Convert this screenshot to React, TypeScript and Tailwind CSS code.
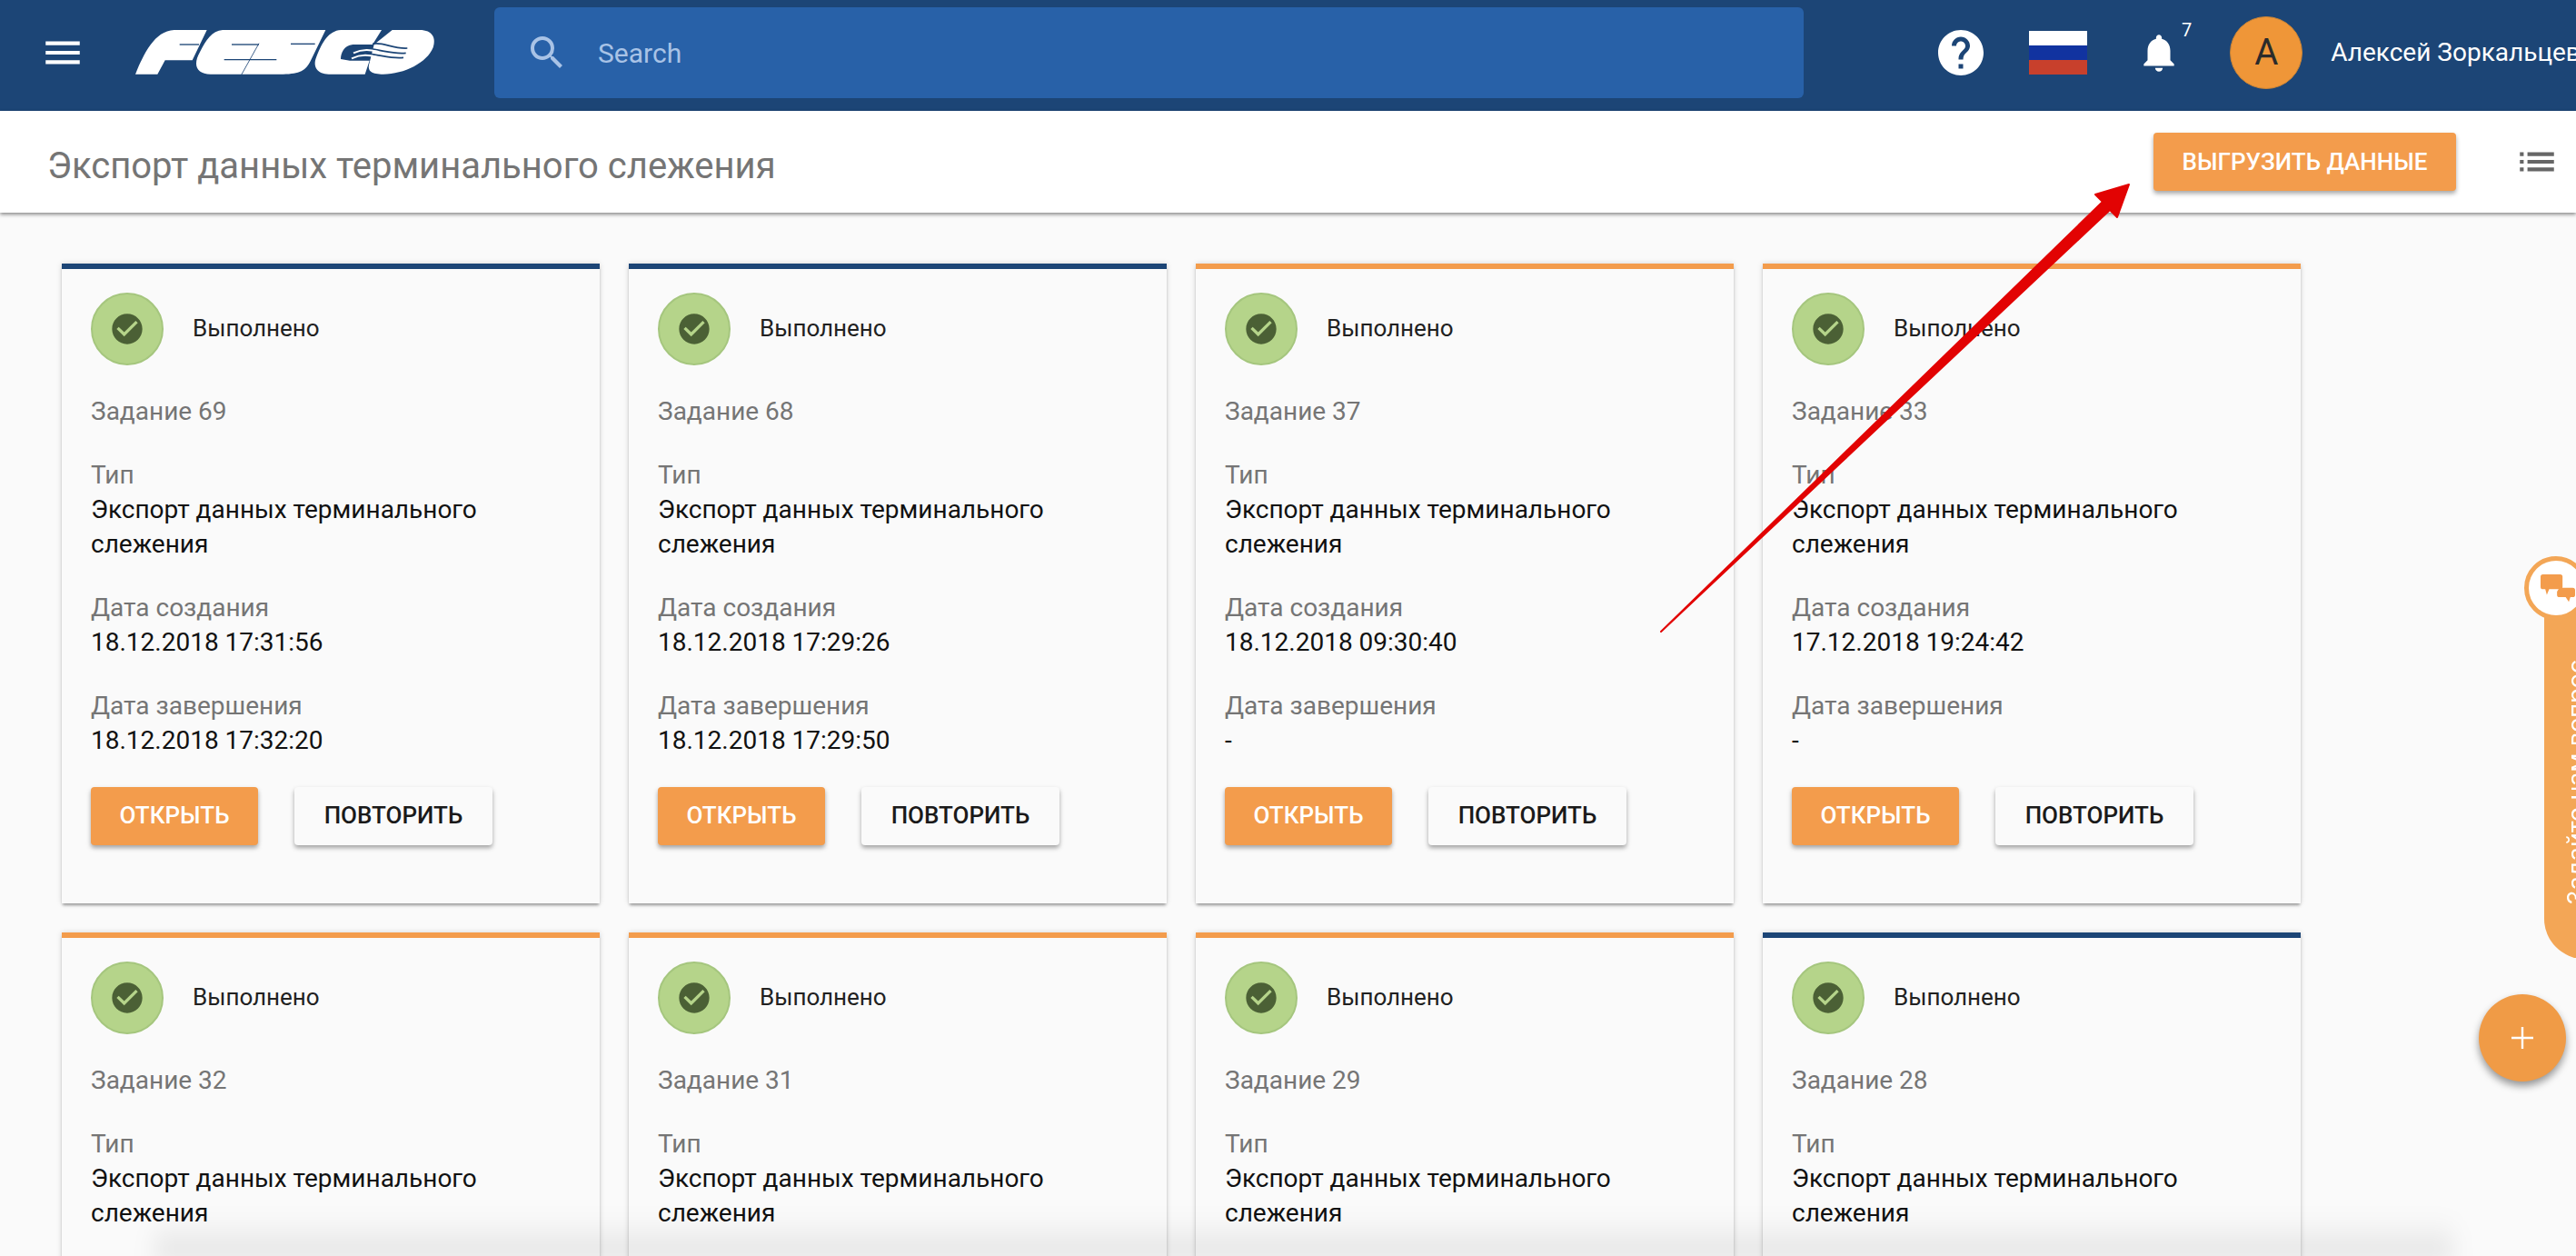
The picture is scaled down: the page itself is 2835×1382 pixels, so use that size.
import { MdCheckCircle, MdHelp, MdList, MdMenu, MdNotifications, MdSearch } from "react-icons/md";

type Task = {
  num: number;
  accent: "blue" | "orange";
  created?: string;
  finished?: string;
};

const tasks: Task[] = [
  { num: 69, accent: "blue", created: "18.12.2018 17:31:56", finished: "18.12.2018 17:32:20" },
  { num: 68, accent: "blue", created: "18.12.2018 17:29:26", finished: "18.12.2018 17:29:50" },
  { num: 37, accent: "orange", created: "18.12.2018 09:30:40", finished: "-" },
  { num: 33, accent: "orange", created: "17.12.2018 19:24:42", finished: "-" },
  { num: 32, accent: "orange" },
  { num: 31, accent: "orange" },
  { num: 29, accent: "orange" },
  { num: 28, accent: "blue" },
];

const Logo = () => (
  <svg viewBox="0 0 1020 174" className="w-[340px] h-[58px] shrink-0">
    <g fill="#fff">
      {/* F */}
      <path d="M12 158C40 90 75 15 140 12L248 12L200 112L110 112L85 158Z" />
      {/* E + S */}
      <path d="M300 12L640 12L590 115C575 145 555 158 500 158L260 158C215 156 200 130 225 85C245 45 265 15 300 12Z" />
      {/* C */}
      <path d="M690 12L825 12L795 60L730 60C700 62 690 90 690 108L720 113L785 113L770 158L650 158C615 158 595 135 610 100C630 50 650 15 690 12Z" />
      {/* O */}
      <path d="M860 12L950 12C995 12 1005 40 995 70C975 120 900 158 830 158C795 158 775 150 785 120L800 60Z" />
    </g>
    <g stroke="#1c4576" fill="none">
      <path d="M158 60L222 60" strokeWidth="4" />
      <path d="M330 60L420 60" strokeWidth="4" />
      <path d="M305 110L478 110" strokeWidth="4" />
      <path d="M362 160L420 56" strokeWidth="2.5" />
      <path d="M525 58L605 58" strokeWidth="4" />
      <path d="M795 58C830 50 860 75 910 72" strokeWidth="5" />
      <path d="M735 78C790 62 850 95 905 88" strokeWidth="5" />
      <path d="M728 95C790 78 840 110 897 103" strokeWidth="5" />
    </g>
    <g stroke="#fff" fill="none" strokeWidth="6">
      <path d="M732 88C765 72 790 78 815 84" />
      <path d="M726 106C760 90 785 95 810 102" />
    </g>
  </svg>
);

const TopBar = () => (
  <header className="h-[122px] shrink-0 pb-[6px] bg-[#1c4576] flex items-center overflow-hidden text-white">
    <MdMenu size={50} className="ml-[44px] shrink-0" />
    <div className="ml-[51px]">
      <Logo />
    </div>
    <div className="ml-[59px] w-[1441px] h-[100px] shrink-0 rounded-md bg-[#2861a8] flex items-center">
      <MdSearch size={48} className="ml-[34px] text-[#a9c3e6] shrink-0" />
      <span className="ml-[32px] text-[30px] text-[#a9c3e6]">Search</span>
    </div>
    <MdHelp size={60} className="ml-[143px] shrink-0" />
    <div className="ml-[45px] w-[64px] h-[48px] shrink-0 flex flex-col">
      <div className="h-1/3 bg-white" />
      <div className="h-1/3 bg-[#1133a0]" />
      <div className="h-1/3 bg-[#c8402c]" />
    </div>
    <div className="ml-[54px] shrink-0 flex items-start">
      <MdNotifications size={50} />
      <span className="-mt-[12px] text-[20px] leading-[24px]">7</span>
    </div>
    <div className="ml-[42px] w-[80px] h-[80px] shrink-0 rounded-full bg-[#ef9638] border border-[#c98436] flex items-center justify-center text-[40px] text-[#2b2b2b]">
      А
    </div>
    <span className="ml-[31px] text-[28px] whitespace-nowrap">Алексей Зоркальцев</span>
  </header>
);

const TitleBar = () => (
  <div className="relative z-10 h-[112px] shrink-0 bg-white shadow-[0_2px_4px_rgba(0,0,0,0.45)] flex items-center">
    <h1 className="ml-[52px] pt-[10px] text-[40px] font-normal text-[#757575] whitespace-nowrap">
      Экспорт данных терминального слежения
    </h1>
    <button className="ml-auto w-[333px] h-[64px] rounded bg-[#f39c4c] text-white text-[26px] font-medium shadow-[0_3px_5px_rgba(0,0,0,0.35)]">
      ВЫГРУЗИТЬ ДАННЫЕ
    </button>
    <MdList size={50} className="ml-[64px] mr-[18px] text-[#666] shrink-0" />
  </div>
);

const Field = ({ label, children }: { label: string; children: React.ReactNode }) => (
  <div>
    <div className="text-[#757575]">{label}</div>
    <div className="text-[#111]">{children}</div>
  </div>
);

const Card = ({ task }: { task: Task }) => (
  <div
    className={`h-[704px] overflow-hidden bg-[#fafafa] border-t-[6px] px-8 pt-[26px] flex flex-col gap-8 text-[28px] leading-[38px] shadow-[0_3px_3px_-1px_rgba(0,0,0,0.35),0_0_6px_rgba(0,0,0,0.15)] ${
      task.accent === "blue" ? "border-[#1c4576]" : "border-[#f39c4c]"
    }`}
  >
    <div className="flex items-center">
      <div className="w-20 h-20 rounded-full bg-[#b5d48a] border-2 border-[#a5c67e] flex items-center justify-center">
        <MdCheckCircle size={40} className="text-[#4b6035]" />
      </div>
      <span className="ml-[32px] pb-[2px] text-[26px] text-[#212121]">Выполнено</span>
    </div>
    <div className="text-[#757575]">Задание {task.num}</div>
    <Field label="Тип">Экспорт данных терминального слежения</Field>
    {task.created && <Field label="Дата создания">{task.created}</Field>}
    {task.finished && <Field label="Дата завершения">{task.finished}</Field>}
    {task.created && (
      <div className="flex gap-10 text-[26px] font-medium">
        <button className="w-[184px] h-16 pb-[2px] rounded bg-[#f39c4c] text-white shadow-[0_3px_5px_rgba(0,0,0,0.35)]">
          ОТКРЫТЬ
        </button>
        <button className="w-[218px] h-16 pb-[2px] rounded bg-[#fafafa] text-[#1a1a1a] shadow-[0_3px_5px_rgba(0,0,0,0.35)]">
          ПОВТОРИТЬ
        </button>
      </div>
    )}
  </div>
);

const ChatTab = () => (
  <div className="absolute left-[2778px] top-[612px] w-[70px]">
    <div className="absolute left-[22px] top-[30px] w-[60px] h-[413px] rounded-bl-[44px] bg-[#f3a656]">
      <span className="absolute left-[12px] top-[68px] h-[286px] [writing-mode:vertical-rl] rotate-180 text-white text-[27px] leading-[48px] whitespace-nowrap font-['Inter',sans-serif]">
        Задайте нам вопрос
      </span>
    </div>
    <div className="absolute left-0 top-0 w-[70px] h-[70px] rounded-full bg-white border-[5px] border-[#f3a656] flex items-center justify-center">
      <svg viewBox="0 0 44 36" className="w-[38px] h-[33px] ml-[4px]" fill="#f39c4c">
        <path d="M3 0h22a3 3 0 0 1 3 3v13a3 3 0 0 1-3 3H11l-3 7-2-7H3a3 3 0 0 1-3-3V3a3 3 0 0 1 3-3z" />
        <path d="M24 17h17a3 3 0 0 1 3 3v6a3 3 0 0 1-3 3h-3l-2 6-4-6h-8a3 3 0 0 1-3-3v-4z" />
      </svg>
    </div>
  </div>
);

const Arrow = () => (
  <svg className="absolute inset-0 z-20 w-full h-full pointer-events-none" viewBox="0 0 2835 1382">
    <path
      d="M1828 695L2314 222L2306 214L2343 203L2330 239L2322 231Z"
      fill="#e20303"
      stroke="#e20303"
      strokeWidth="2"
      strokeLinejoin="round"
    />
  </svg>
);

export default function App() {
  return (
    <div className="relative w-[2835px] h-[1382px] overflow-hidden bg-[#fafafa] flex flex-col font-['Roboto',sans-serif]">
      <TopBar />
      <TitleBar />
      <main className="pt-[56px] pl-[68px] grid grid-cols-[repeat(4,592px)] gap-8">
        {tasks.map((t) => (
          <Card key={t.num} task={t} />
        ))}
      </main>

      {/* faded strip along the bottom edge */}
      <div className="absolute left-[170px] right-[135px] -bottom-[6px] h-[50px] bg-gradient-to-t from-black/10 to-transparent blur-md" />

      <ChatTab />
      <button className="absolute left-[2728px] top-[1094px] w-24 h-24 rounded-full bg-[#f09b46] text-white flex items-center justify-center shadow-[0_5px_9px_rgba(0,0,0,0.4)]">
        <svg viewBox="0 0 24 24" className="w-6 h-6" fill="none" stroke="currentColor" strokeWidth="2.4">
          <path d="M12 0v24M0 12h24" />
        </svg>
      </button>
      <Arrow />
    </div>
  );
}
